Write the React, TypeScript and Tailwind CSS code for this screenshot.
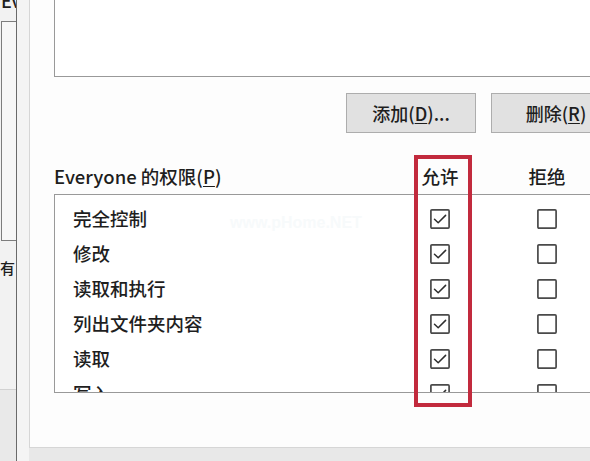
import React from "react";

const Check = ({ checked }: { checked: boolean }) => (
  <svg width="20" height="20" viewBox="0 0 20 20" className="block">
    <rect x="0.9" y="0.9" width="18.2" height="18.2" rx="1" fill="#ffffff" stroke="#4a4a4a" strokeWidth="1.7" />
    {checked && (
      <path d="M4.5 10.2 L8.2 13.8 L15.6 6.4" fill="none" stroke="#2e2e2e" strokeWidth="1.5" strokeLinecap="round" strokeLinejoin="round" />
    )}
  </svg>
);

const rows = ["完全控制", "修改", "读取和执行", "列出文件夹内容", "读取", "写入"];

export default function App() {
  return (
    <div className="relative w-[590px] h-[461px] flex overflow-hidden bg-[#f0f0f0] text-[#1e1e1e] font-medium font-['Noto_Sans_CJK_SC','Noto_Sans',sans-serif]">
      {/* left strip (other window) */}
      <div className="w-[16px] shrink-0 flex flex-col bg-[#f2f2f2]">
        <div className="h-[21px] overflow-hidden pl-[1px]">
          <div className="-mt-[12px] text-[18px] leading-[24px] whitespace-nowrap">Ev</div>
        </div>
        <div className="h-[220px] ml-[1px] border-l border-t border-b border-[#7d7d7d] bg-[#f7f7f7]" />
        <div className="h-[149px] border-b border-[#d2d2d2] pt-[17px]">
          <div className="text-[15px] leading-[20px] whitespace-nowrap">有</div>
        </div>
        <div className="flex-1 bg-[#e9e9e9]" />
      </div>
      <div className="w-px shrink-0 bg-[#6a6a6a]" />

      {/* main dialog */}
      <div className="flex-1 flex bg-[#f4f4f4]">
        <div className="w-[12px] shrink-0" />
        <div className="flex-1 flex flex-col min-w-0">
          <div className="flex-1 bg-[#fdfdfd] border-l border-b border-[#d6d6d6] overflow-hidden">
            <div className="pl-[24px]">
              {/* group / user list */}
              <div className="w-[560px] h-[77px] border-l border-b border-[#999999] bg-white" />

              {/* buttons */}
              <div className="mt-[16px] pl-[292px] flex gap-[15px]">
                <div className="w-[130px] h-[40px] shrink-0 flex items-center justify-center bg-[#e1e1e1] border border-[#adadad] text-[18px] leading-none whitespace-nowrap">
                  添加(<span className="underline underline-offset-2">D</span>)...
                </div>
                <div className="w-[130px] h-[40px] shrink-0 flex items-center justify-center bg-[#e1e1e1] border border-[#adadad] text-[18px] leading-none whitespace-nowrap">
                  删除(<span className="underline underline-offset-2">R</span>)
                </div>
              </div>

              {/* header */}
              <div className="mt-[31px] h-[24px] flex items-center text-[18.5px] leading-[24px] whitespace-nowrap">
                <div className="w-[366px] shrink-0">
                  Everyone 的权限(<span className="underline underline-offset-2">P</span>)
                </div>
                <div className="w-[40px] shrink-0 flex justify-center">允许</div>
                <div className="w-[40px] shrink-0 ml-[67px] flex justify-center">拒绝</div>
              </div>

              {/* permissions list */}
              <div className="mt-[6px] w-[560px] h-[199px] border-l border-t border-b border-[#999999] bg-white overflow-hidden">
                <div className="pt-[6px] pl-[18px]">
                  {rows.map((r) => (
                    <div key={r} className="h-[35px] flex items-center text-[18.5px] whitespace-nowrap">
                      <div className="w-[347px] shrink-0">{r}</div>
                      <div className="w-[40px] shrink-0 flex justify-center">
                        <Check checked />
                      </div>
                      <div className="w-[40px] shrink-0 ml-[67px] flex justify-center">
                        <Check checked={false} />
                      </div>
                    </div>
                  ))}
                </div>
              </div>
            </div>
          </div>
          <div className="h-[13px] shrink-0 bg-[#e8e8e8]" />
        </div>
      </div>

      {/* watermark */}
      <div className="absolute left-[230px] top-[211px] text-[16px] font-bold text-[#f7fafb] font-['Liberation_Sans',sans-serif] pointer-events-none">
        www.pHome.NET
      </div>

      {/* red annotation box */}
      <div className="absolute left-[414px] top-[155px] w-[58px] h-[252px] border-[4px] border-[#c22a3d] pointer-events-none" />
    </div>
  );
}
